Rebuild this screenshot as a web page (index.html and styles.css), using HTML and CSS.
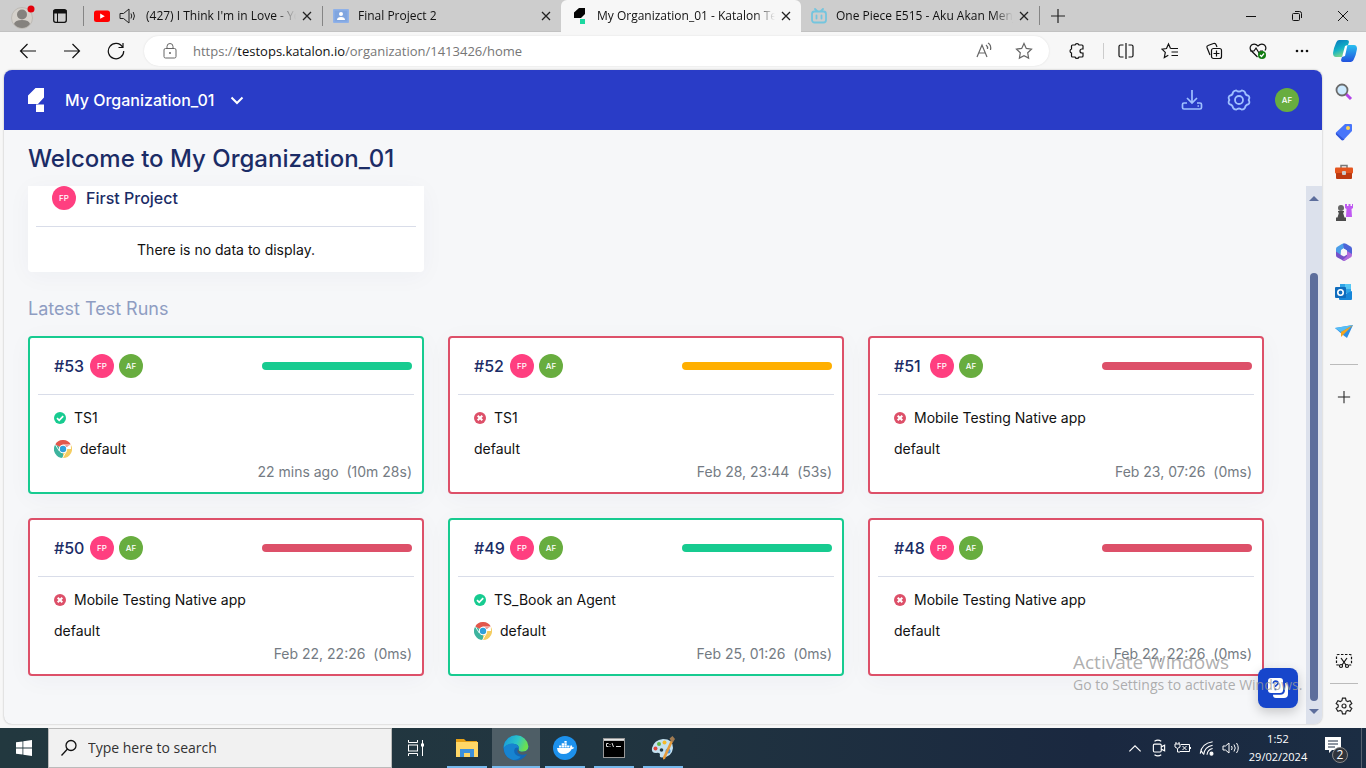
FILE: index.html
```html
<!DOCTYPE html>
<html lang="en">
<head>
<meta charset="utf-8">
<title>My Organization_01 - Katalon TestOps</title>
<link rel="stylesheet" href="styles.css">
</head>
<body>
<svg class="defs" aria-hidden="true">
  <symbol id="x" viewBox="0 0 16 16"><path d="M4 4l8 8M12 4l-8 8" fill="none" stroke="#222" stroke-width="1.3"/></symbol>
  <symbol id="plus" viewBox="0 0 16 16"><path d="M8 1v14M1 8h14" fill="none" stroke="#222" stroke-width="1.2"/></symbol>
  <symbol id="ok" viewBox="0 0 12 12"><circle cx="6" cy="6" r="6" fill="#17cb90"/><path d="M3 6.200l2.200 2.200L9.200 4.200" fill="none" stroke="#fff" stroke-width="1.700"/></symbol>
  <symbol id="bad" viewBox="0 0 12 12"><circle cx="6" cy="6" r="6" fill="#dd5069"/><path d="M3.700 3.700l4.600 4.600M8.300 3.700L3.700 8.300" fill="none" stroke="#fff" stroke-width="2"/></symbol>
  <symbol id="chrome" viewBox="0 0 18 18">
    <path d="M9 9L1.200 4.500A9 9 0 0 1 16.800 4.500z" fill="#e2574c"/><path d="M9 9L1.200 4.500A9 9 0 0 0 9 18z" fill="#3db39e"/><path d="M9 9h8L16.800 4.500A9 9 0 0 1 9 18z" fill="#f4cd61"/>
    <path d="M8.500 5H17M5.300 11L1.300 4.500M12.500 11L8.500 18" stroke="#fff" stroke-width=".9"/><circle cx="9" cy="9" r="4.200" fill="#fff"/><circle cx="9" cy="9" r="3.200" fill="#2fa0da"/></symbol>
</svg>

<header class="tabstrip">
  <button class="profile" aria-label="Profile"><svg width="24" height="24" viewBox="0 0 24 24"><circle cx="11" cy="13" r="10.500" fill="#d5d1cb" stroke="#bdbab5"/><circle cx="11" cy="9.500" r="5" fill="#85827e"/><path d="M3 19q1-4 8-4t8 4q-3 4-8 4t-8-4z" fill="#85827e"/><circle cx="20" cy="4" r="3.500" fill="#e3000b"/></svg></button>
  <button class="workspace" aria-label="Workspaces"><svg width="16" height="16" viewBox="0 0 16 16"><rect x="1.700" y="1.700" width="12.600" height="12.600" rx="2" fill="none" stroke="#111" stroke-width="1.300"/><path d="M1.500 2h13v3.500h-13z" fill="#111"/><path d="M5.500 4v10" stroke="#111"/></svg></button>
  <div class="tab divided">
    <svg width="16" height="16" viewBox="0 0 16 16"><rect y="2.500" width="16" height="11.500" rx="2.500" fill="#f00"/><path d="M6.200 5.500v5.300L10.800 8.200z" fill="#fff"/></svg>
    <svg width="18" height="18" viewBox="0 0 18 18" fill="none" stroke="#222"><path d="M1 6.500h3.500L10 2v14l-5.500-4.500H1zM12 6.500q1.500 2.500 0 5M14.200 5q2.500 4 0 8"/></svg>
    <a href="#" class="tab-name">(427) I Think I'm in Love - YouTube</a>
    <button aria-label="Close tab"><svg width="16" height="16"><use href="#x"/></svg></button>
  </div>
  <div class="tab divided">
    <svg width="16" height="16" viewBox="0 0 16 16"><rect y="1" width="16" height="14" rx="1" fill="#8fb1e8"/><rect x="1.500" y="2.500" width="13" height="11" fill="#80a5df"/><circle cx="8" cy="6" r="2" fill="#fff"/><path d="M4 12q0-3 4-3t4 3z" fill="#fff"/></svg>
    <a href="#" class="tab-name">Final Project 2</a>
    <button aria-label="Close tab"><svg width="16" height="16"><use href="#x"/></svg></button>
  </div>
  <div class="tab active">
    <svg width="16" height="16" viewBox="0 0 16 16"><path d="M7 0h6v6l-4 4H2V4.500z" fill="#050505"/><path d="M8 11h5v5H8z" fill="#1bd8a0"/></svg>
    <a href="#" class="tab-name">My Organization_01 - Katalon TestOps</a>
    <button aria-label="Close tab"><svg width="16" height="16"><use href="#x"/></svg></button>
  </div>
  <div class="tab last">
    <svg width="16" height="16" viewBox="0 0 16 16" fill="none" stroke="#74c5de" stroke-width="1.800" stroke-linecap="round"><rect x="1" y="3.500" width="14" height="11" rx="2.500"/><path d="M4 1l2 2M12 1l-2 2M5.500 7.500v3M10.500 7.500v3"/></svg>
    <a href="#" class="tab-name">One Piece E515 - Aku Akan Menjadi</a>
    <button aria-label="Close tab"><svg width="16" height="16"><use href="#x"/></svg></button>
  </div>
  <button class="new-tab" aria-label="New tab"><svg width="16" height="16"><use href="#plus"/></svg></button>
  <div class="window-buttons">
    <button aria-label="Minimize"><svg width="12" height="12"><path d="M1 6.500h10" stroke="#111"/></svg></button>
    <button aria-label="Restore"><svg width="12" height="12" fill="none" stroke="#111"><rect x="1.500" y="3.500" width="7" height="7" rx="1"/><path d="M4 1.500h4.500q2 0 2 2V8"/></svg></button>
    <button aria-label="Close"><svg width="12" height="12"><path d="M1 1l10 10M11 1L1 11" stroke="#111"/></svg></button>
  </div>
</header>

<nav class="toolbar">
  <button aria-label="Back"><svg width="18" height="18" viewBox="0 0 18 18"><path d="M17 9H1.500M8.500 2l-7 7 7 7"/></svg></button>
  <button aria-label="Forward"><svg width="18" height="18" viewBox="0 0 18 18"><path d="M1 9h15.500M9.500 2l7 7-7 7"/></svg></button>
  <button aria-label="Refresh"><svg width="18" height="18" viewBox="0 0 18 18"><path d="M15.500 5A7.700 7.700 0 1 0 16.700 9M16 1v4.500h-4.500"/></svg></button>
  <div class="address">
    <svg width="14" height="16" viewBox="0 0 14 16" fill="none" stroke="#666"><rect x="1" y="5.500" width="12" height="9.500" rx="1.500"/><path d="M4 5.500V3.500a3 3 0 0 1 6 0v2"/><circle cx="7" cy="10" r=".6" fill="#666"/></svg>
    <a href="#" class="url">https://<b>testops.katalon.io</b>/organization/1413426/home</a>
    <button aria-label="Read aloud"><svg width="18" height="18" viewBox="0 0 18 18" class="muted"><path d="M2 15L7 3l5 12M3.800 11h6.400M11 3q2 1.500 1.500 4M13 1q3.500 2 2.500 7"/></svg></button>
    <button aria-label="Favorite"><svg width="18" height="18" viewBox="0 0 18 18" class="muted"><path d="M9 1.500l2.300 4.900 5.200.7-3.800 3.700.9 5.300L9 13.600l-4.600 2.500.9-5.300L1.500 7.100l5.200-.7z"/></svg></button>
  </div>
  <button class="ext" aria-label="Extensions"><svg width="18" height="18" viewBox="0 0 18 18"><path d="M4.500 3H7a2.100 2.100 0 0 1 4 0h3q1 0 1 1v3h-1a2 2 0 0 0 0 4h1v3q0 1-1 1h-3a2.100 2.100 0 0 1-4 0H4.500q-1 0-1-1v-3a2.100 2.100 0 0 1 0-4V4q0-1 1-1z"/></svg></button>
  <button aria-label="Split screen"><svg width="18" height="18" viewBox="0 0 18 18"><path d="M6.500 3h-3Q2 3 2 4.500v9Q2 15 3.500 15h3M11.500 3h3Q16 3 16 4.500v9q0 1.500-1.500 1.500h-3M9 1v16"/></svg></button>
  <button aria-label="Favorites"><svg width="18" height="18" viewBox="0 0 18 18"><path d="M9.500 6.500L7.500 2l-2 4.500-4.500.7 3.300 3.200-1 5.100 4-2.200M9.500 6.500H17M10.500 10H17M10.500 13.500H17"/></svg></button>
  <button aria-label="Collections"><svg width="18" height="18" viewBox="0 0 18 18"><rect x="6.500" y="6.500" width="10" height="10" rx="2"/><path d="M11.500 8.500v6M8.500 11.500h6M5 13L2 5.500Q1.500 4 3 3.500L8.500 1.500Q10.500 1 11 2.500L12 5"/></svg></button>
  <button aria-label="Browser essentials"><svg width="18" height="18" viewBox="0 0 18 18"><path d="M8.500 15L2 8.500Q0 5.500 2.500 3 6 1 9 4q3-3 6.500-1Q18 5.500 16 8.500M1 9h4l2-3 3 5 1.500-2H14"/><circle cx="13" cy="13" r="4" fill="#107c10" stroke="none"/><path d="M11 13l1.500 1.500L15 11.500" stroke="#fff"/></svg></button>
  <button aria-label="More"><svg width="18" height="18" viewBox="0 0 18 18"><g fill="#111" stroke="none"><circle cx="4" cy="9" r="1.300"/><circle cx="9" cy="9" r="1.300"/><circle cx="14" cy="9" r="1.300"/></g></svg></button>
  <button aria-label="Copilot" class="copilot"><svg width="24" height="24" viewBox="0 0 24 24"><defs><linearGradient id="ca" x2=".4" y2="1"><stop stop-color="#0874bd"/><stop offset=".6" stop-color="#12b2c6"/><stop offset="1" stop-color="#80d68a"/></linearGradient><linearGradient id="cb" x2="0" y2="1"><stop stop-color="#29c0f0"/><stop offset="1" stop-color="#2252de"/></linearGradient></defs><path d="M6 1h8q2 0 2 2L12 15q-1 3-4 3H3q-3 0-3-4Q1 8 3 4 4 1 6 1z" fill="url(#ca)" stroke="none"/><path d="M18 6h3q3 0 3 4-1 6-3 10-1 3-3 3h-8q-2 0-2-2L12 9q1-3 4-3z" fill="url(#cb)" stroke="none"/><path d="M12 7l2.500-1L12 17l-3 1z" fill="#fff" stroke="none"/></svg></button>
</nav>

<div class="middle">
  <div class="app">
    <header class="app-bar">
      <svg width="16" height="24" viewBox="0 0 16 24"><path d="M7.500 0H16v9.500L10 16H0V7.500zM8 16.500h8V24H8z" fill="#fff"/></svg>
      <button class="org">My Organization_01<svg width="14" height="9" viewBox="0 0 14 9"><path d="M1.500 1.500L7 7l5.500-5.500" fill="none" stroke="#fff" stroke-width="2"/></svg></button>
      <div class="app-actions">
        <button aria-label="Download"><svg width="22" height="22" viewBox="0 0 22 22" fill="none" stroke="#9fc0ff" stroke-width="1.700"><path d="M11 1v13M6 9l5 5 5-5M6 14H3q-1.500 0-1.500 1.500v3Q1.500 20 3 20h16q1.500 0 1.500-1.500v-3Q20.500 14 19 14h-3"/><path d="M16.500 17h1.500"/></svg></button>
        <button aria-label="Settings"><svg width="24" height="24" viewBox="0 0 24 24" fill="none" stroke="#9fc0ff" stroke-width="1.800" stroke-linejoin="round"><circle cx="12" cy="12" r="4"/><path d="M9.200 2.300Q12 4.800 14.800 2.300q2.200.2 3.200 2 .3 3 3.700 3.600 1.400 2-.1 4.100 1.500 2.100.1 4.100-3.400.6-3.700 3.600-1 1.800-3.200 2-2.800-2.500-5.600 0-2.200-.2-3.200-2-.3-3-3.700-3.600-1.400-2 .1-4.100-1.500-2.100-.1-4.100 3.400-.6 3.700-3.600 1-1.800 3.200-2z"/></svg></button>
        <button class="avatar af" aria-label="Account AF">AF</button>
      </div>
    </header>
    <h1>Welcome to My Organization_01</h1>
    <div class="scroller">
      <main>
        <section class="project"><h3><span class="avatar fp">FP</span>First Project</h3><p>There is no data to display.</p></section>
        <h2>Latest Test Runs</h2>
        <div class="runs">
          <article class="run pass"><header><a href="#">#53</a><span class="avatar fp">FP</span><span class="avatar af">AF</span><i class="bar green"></i></header><div class="body"><p><svg width="12" height="12"><use href="#ok"/></svg>TS1</p><p><svg width="18" height="18"><use href="#chrome"/></svg>default</p><time>22 mins ago&nbsp; (10m 28s)</time></div></article>
          <article class="run"><header><a href="#">#52</a><span class="avatar fp">FP</span><span class="avatar af">AF</span><i class="bar amber"></i></header><div class="body"><p><svg width="12" height="12"><use href="#bad"/></svg>TS1</p><p>default</p><time>Feb 28, 23:44&nbsp; (53s)</time></div></article>
          <article class="run"><header><a href="#">#51</a><span class="avatar fp">FP</span><span class="avatar af">AF</span><i class="bar"></i></header><div class="body"><p><svg width="12" height="12"><use href="#bad"/></svg>Mobile Testing Native app</p><p>default</p><time>Feb 23, 07:26&nbsp; (0ms)</time></div></article>
          <article class="run"><header><a href="#">#50</a><span class="avatar fp">FP</span><span class="avatar af">AF</span><i class="bar"></i></header><div class="body"><p><svg width="12" height="12"><use href="#bad"/></svg>Mobile Testing Native app</p><p>default</p><time>Feb 22, 22:26&nbsp; (0ms)</time></div></article>
          <article class="run pass"><header><a href="#">#49</a><span class="avatar fp">FP</span><span class="avatar af">AF</span><i class="bar green"></i></header><div class="body"><p><svg width="12" height="12"><use href="#ok"/></svg>TS_Book an Agent</p><p><svg width="18" height="18"><use href="#chrome"/></svg>default</p><time>Feb 25, 01:26&nbsp; (0ms)</time></div></article>
          <article class="run"><header><a href="#">#48</a><span class="avatar fp">FP</span><span class="avatar af">AF</span><i class="bar"></i></header><div class="body"><p><svg width="12" height="12"><use href="#bad"/></svg>Mobile Testing Native app</p><p>default</p><time>Feb 22, 22:26&nbsp; (0ms)</time></div></article>
        </div>
      </main>
      <div class="scrollbar"><i class="arrow up"></i><i class="thumb"></i><i class="arrow down"></i></div>
    </div>
    <button class="help" aria-label="Help"><svg width="20" height="20" viewBox="0 0 20 20"><path d="M3 0h9q3 0 3 3v9q0 3-3 3H3q-3 0-3-3V3q0-3 3-3z" fill="#fff"/><path d="M5.300 5.500q0-2.300 2.300-2.300t2.300 2q0 1.300-1.300 1.900T7.500 9M7.500 10.500v1.700" fill="none" stroke="#1746cb" stroke-width="1.700"/><path d="M17 5q3 0 3 3v8q0 4-4 4H8q-3 0-3-3.300h7q5 0 5-5z" fill="#fff"/></svg></button>
    <div class="watermark"><strong>Activate Windows</strong><span>Go to Settings to activate Windows.</span></div>
  </div>

  <aside class="sidebar">
    <button aria-label="Search"><svg width="18" height="18" viewBox="0 0 18 18"><path d="M11 11l5 5" stroke="#b344e8" stroke-width="3"/><circle cx="7" cy="7" r="5.500" fill="#cdeaff" stroke="#6b6b6b" stroke-width="1.800"/></svg></button>
    <button aria-label="Shopping"><svg width="18" height="18" viewBox="0 0 18 18"><path d="M10 1h6q1 0 1 1v6l-8.500 9q-1 .5-2 0L1 11.500q-.5-1.500 0-2z" fill="#4875fa"/><path d="M1 9.500l8.500 7.300-1 .2q-1 .5-2 0L1 11.500z" fill="#3257d8"/><circle cx="13" cy="5" r="2" fill="#ffd34d"/></svg></button>
    <button aria-label="Tools"><svg width="18" height="18" viewBox="0 0 18 18"><path d="M6 5V2.500h6V5" fill="none" stroke="#777" stroke-width="1.500"/><rect y="4.500" width="18" height="6" rx="1" fill="#e4551e"/><path d="M1 10h16v5q0 1-1 1H2q-1 0-1-1z" fill="#bd3a10"/><rect x="7" y="8" width="4" height="4" rx="1" fill="#ccc"/></svg></button>
    <button aria-label="Games"><svg width="18" height="18" viewBox="0 0 18 18"><path d="M10 1h2v2h1.500V1h2v2H17V1h1v4l-1.500 1 .5 8h-6l.5-8L10 5z" fill="#c05af2"/><circle cx="6" cy="5" r="3" fill="#666"/><path d="M3 8h6v1.500H8l1.500 5H11V18H1v-3.500h1.500l1.500-5H3z" fill="#4c4c4c"/></svg></button>
    <button aria-label="Microsoft 365"><svg width="18" height="18" viewBox="0 0 18 18"><path d="M6 1.500q3-2 5.500 0L9 5 6 7l-.5 6L2 12q-1-.5-1-2V6q0-1.500 1-2z" fill="#4b9ee8"/><path d="M1 8.500l5 3.500 3 1.500L13 11l1 4-3.500 2.300q-1.500 1-3 0L2 14.200q-1-.7-1-2z" fill="#7650c8"/><path d="M12 6l5 2v4q0 1.500-1 2.200l-5.500 3.100q-1.500 1-3 0L12 13z" fill="#b06bdc"/><path d="M8 .8q1.500-.8 3 0L16 3.800q1 .7 1 2.200v5l-5-3-3-2.500z" fill="#4c64d7"/><path d="M9 5.800l3 1.600v3.400l-3 1.700-3-1.700V7.400z" fill="#f7f7f7"/></svg></button>
    <button aria-label="Outlook"><svg width="18" height="18" viewBox="0 0 18 18"><path d="M5 1h10q1 0 1 1v8H5z" fill="#2fa4e7"/><path d="M10 1h6v5h-6z" fill="#56c8f5"/><path d="M4 8l6 3 7-3v8q0 1-1 1H5q-1 0-1-1z" fill="#1686d9"/><rect y="4" width="11" height="11" rx="1" fill="#0f6cbd"/><circle cx="5.500" cy="9.500" r="2.700" fill="none" stroke="#fff" stroke-width="1.600"/></svg></button>
    <button aria-label="Drop"><svg width="18" height="18" viewBox="0 0 18 18"><path d="M0 5l18-3-6 13-4-3z" fill="#2b8fe8"/><path d="M0 5l18-3L6 9z" fill="#56bdf5"/><path d="M18 2L6 9v5l3-3z" fill="#f3a51f"/></svg></button>
    <hr>
    <button class="add" aria-label="Customize"><svg width="14" height="14"><use href="#plus"/></svg></button>
    <button class="shot" aria-label="Screenshot"><svg width="18" height="18" viewBox="0 0 18 18" fill="none" stroke="#111" stroke-width="1.200"><path d="M4 13H2.500Q1.500 13 1.500 12V4q0-1.500 1.500-1.500h12q1.500 0 1.500 1.500v8q0 1-1 1H14" stroke-dasharray="2.500 1.500"/><path d="M6 6l5 7M12 6l-5 7"/><circle cx="6" cy="14" r="1.500"/><circle cx="12" cy="14" r="1.500"/></svg></button>
    <hr>
    <button class="gear" aria-label="Settings"><svg width="18" height="18" viewBox="0 0 18 18" fill="none" stroke="#222" stroke-width="1.200"><circle cx="9" cy="9" r="2"/><path d="M7.500 1.200h3l.6 2.500 1.500.9 2.500-.8 1.700 2.700-2 1.600v1.800l2 1.600-1.700 2.700-2.500-.8-1.500.9-.6 2.500h-3l-.6-2.500-1.500-.9-2.500.8-1.700-2.700 2-1.600V8.100l-2-1.600 1.700-2.700 2.500.8 1.500-.9z"/></svg></button>
  </aside>
</div>

<footer class="taskbar">
  <button class="start" aria-label="Start"><svg width="16" height="16" viewBox="0 0 16 16"><path d="M0 2.300L6.500 1.400v6.100H0zM7.300 1.300L16 0v7.500H7.300zM0 8.400h6.500v6.200L0 13.700zM7.300 8.400H16V16l-8.700-1.300z" fill="#fff"/></svg></button>
  <label class="search"><svg width="18" height="18" viewBox="0 0 18 18" fill="none" stroke="#111" stroke-width="1.300"><circle cx="11" cy="6.500" r="5"/><path d="M7.500 10L1.500 16.500"/></svg><input type="text" placeholder="Type here to search" aria-label="Search"></label>
  <button class="view" aria-label="Task view"><svg width="18" height="16" viewBox="0 0 18 16" fill="none" stroke="#fff"><path d="M1.500 0v2.500h9V0M1.500 16v-2.500h9V16M15.500 0v16"/><rect x="1.500" y="5" width="9" height="6"/><path d="M14 3.500h3v3h-3z" fill="#fff" stroke="none"/></svg></button>
  <button class="task" aria-label="File Explorer"><svg width="24" height="24" viewBox="0 0 24 24"><path d="M1 3h8l2 2h11v16H1z" fill="#e6a117"/><path d="M1 6h22v15H1z" fill="#ffd767"/><path d="M5 21v-8h14v8h-4v-4H9v4z" fill="#3d91dc"/></svg></button>
  <button class="task current" aria-label="Edge"><svg width="26" height="26" viewBox="0 0 24 24"><defs><linearGradient id="ea" x2="1" y2=".3"><stop stop-color="#1795dc"/><stop offset=".6" stop-color="#2cc5c8"/><stop offset="1" stop-color="#6be050"/></linearGradient></defs><circle cx="12" cy="12" r="11.500" fill="#1267b5"/><path d="M.7 10A11.500 11.500 0 0 1 23.500 10.500Q23 16 16.500 15.500 14 15 14.500 13 15.500 8.500 9.500 8 4 8 .7 12z" fill="url(#ea)"/><path d="M.6 11.500Q4 7.500 9.500 8q4.500.5 5 4-3.500-1.500-4.200 2-.3 5 6.200 6-3 3-7 3Q.8 21 .6 11.500z" fill="#1784d0"/><path d="M14.500 13q-.5 2 2 2.500 5 .5 7-3l1 5.500-2.500-.5q-4.500 1.500-7.500-.5-2.500-2 0-4z" fill="#4e5e66"/></svg></button>
  <button class="task" aria-label="Docker"><svg width="24" height="24" viewBox="0 0 24 24"><circle cx="12" cy="12" r="12" fill="#1d91ec"/><path d="M4 12h13q0-2 1-3 1.500 1 1.300 2.300l2 .2q-.8 1.500-2.800 1.700Q16.500 18 10.500 18 4.500 18 4 12zM6 9.500h2.300v2H6zM8.700 9.500H11v2H8.700zM11.400 9.500h2.300v2h-2.300zM14.100 9.500h2.300v2h-2.300zM8.700 7.200H11v2H8.700zM11.400 7.200h2.300v2h-2.300zM11.400 5h2.300v1.800h-2.300z" fill="#fff"/></svg></button>
  <button class="task" aria-label="Command Prompt"><svg width="22" height="20" viewBox="0 0 22 20"><rect width="22" height="20" fill="#999"/><rect x="1" y="3" width="20" height="16" fill="#000"/><path d="M1 1h20v1.500H1z" fill="#e6e6e6"/><path d="M5.500 5.500H3.500v3h2M7 6v.8M7 8v.8M9 5l1.500 4M13 8.500h5" fill="none" stroke="#ddd"/></svg></button>
  <button class="task" aria-label="Paint"><svg width="24" height="24" viewBox="0 0 24 24"><path d="M12 3Q22 3 22 12 21 21 11 21.500 8 21.500 9 18.500 9 16 5 17 0 17 1 12 3 4 12 3z" fill="#c4e1f0"/><circle cx="4.500" cy="12.500" r="2" fill="#e1483c"/><circle cx="8" cy="8" r="2" fill="#61b848"/><circle cx="13.500" cy="6.500" r="2" fill="#f5ba28"/><circle cx="10.500" cy="14" r="1.800" fill="#243842"/><circle cx="17" cy="15" r="2.500" fill="#4a94dd"/><path d="M20 4l2 1.500L14 23l-2 .5V21z" fill="#e69b3b"/><path d="M18.500 2.500L21.500 0l2.500 3-2.500 4z" fill="#a07b52"/></svg></button>
  <div class="tray">
    <button aria-label="Hidden icons"><svg width="16" height="18" viewBox="0 0 14 16"><path d="M2 11l5-5 5 5"/></svg></button>
    <button aria-label="Meet Now"><svg width="16" height="18" viewBox="0 0 14 16"><rect x="2" y="4.500" width="7" height="7" rx="1"/><path d="M9 7l3-1.500v5L9 9M3 2q3-2 6 0M3 14q3 2 6 0"/></svg></button>
    <button aria-label="Battery"><svg width="18" height="16" viewBox="0 0 18 16"><path d="M1 4h5v3q-2.500 3-5 0zM2 2v2M5 2v2M3.500 9v3H6M7 4.500h8.500v7H6M16.500 7v2M8.500 6l4 4M12.500 6l-4 4"/></svg></button>
    <button aria-label="Network"><svg width="16" height="18" viewBox="0 0 14 16"><path d="M1 13Q2 4 12 2.500M4 14Q4.500 7 12 5.500M7 14q.5-4.500 5-5.500M1.500 10l2 3"/><circle cx="11" cy="13" r="1.300" fill="#fff"/></svg></button>
    <button aria-label="Volume"><svg width="18" height="16" viewBox="0 0 18 16"><path d="M1 6h2.500L7 3v10l-3.500-3H1zM9.500 6q1.300 2 0 4M12 4.500q2.500 3.500 0 7M14.500 3q3.500 5 0 10"/></svg></button>
    <div class="clock"><span>1:52</span><span>29/02/2024</span></div>
    <button class="notify" aria-label="2 notifications"><svg width="26" height="26" viewBox="0 0 26 26"><path d="M1 2h16v13H8l-3 3v-3H1z" fill="#fff" stroke="none"/><path d="M4 6h10M4 9h10M4 12h7" stroke="#1c2b40"/></svg><span class="count">2</span></button>
  </div>
</footer>
</body>
</html>
```
FILE: styles.css
```css
* { box-sizing: border-box; }
body { margin: 0; height: 100vh; display: flex; flex-direction: column; overflow: hidden; background: #f7f7f7; color: #111; font: 12px/16px "Open Sans", "Noto Sans", sans-serif; }
button { border: 0; padding: 0; background: none; color: inherit; font: inherit; display: flex; align-items: center; justify-content: center; flex: none; }
a { color: inherit; text-decoration: none; }
svg { flex: none; display: block; }
h1, h2, h3, p { margin: 0; font-weight: 400; }
.defs { position: absolute; width: 0; height: 0; }

.tabstrip { display: flex; height: 32px; flex: none; background: #cdcdcd; border-bottom: 1px solid #c2c2c2; }
.profile { width: 46px; padding-top: 2px; }
.workspace { width: 37px; padding-right: 9px; }
.tab { display: flex; align-items: center; gap: 9px; flex: 0 1 239px; min-width: 0; padding: 0 7px 0 10px; border-left: 1px solid transparent; }
.tab.divided { border-image: linear-gradient(#0000 6px, #858585 6px, #858585 26px, #0000 26px) 0 0 0 1; }
.tab.active { flex-basis: 240px; height: 32px; background: #f7f7f7; border-radius: 6px 6px 0 0; }
.tab.last { flex-basis: 238px; padding-left: 9px; }
.tab-name { flex: 1; min-width: 0; overflow: hidden; white-space: nowrap; -webkit-mask-image: linear-gradient(to left, transparent, #000 20px); mask-image: linear-gradient(to left, transparent, #000 20px); }
.tab button { margin-left: -6px; }
.new-tab { width: 36px; border-left: 1px solid #858585; margin: 6px 0; }
.window-buttons { display: flex; margin-left: auto; }
.window-buttons button { width: 46px; }

.toolbar { display: flex; align-items: center; height: 38px; flex: none; padding-left: 6px; }
.toolbar > button { width: 44px; height: 30px; }
.toolbar button svg { fill: none; stroke: #111; stroke-width: 1.2; }
.toolbar button .muted { stroke: #666; }
.address { flex: 1; height: 30px; display: flex; align-items: center; margin-left: 6px; padding: 0 5px 0 19px; background: #fff; border-radius: 15px; box-shadow: 0 0 2px #ddd; }
.address button { width: 40px; }
.url { flex: 1; margin-left: 16px; color: #767676; font-size: 13px; line-height: 20px; }
.url b { color: #111; font-weight: 400; }
.toolbar > .ext { width: 55px; position: relative; }
.ext::after { content: ""; position: absolute; right: 0; top: 7px; height: 16px; border-left: 1px solid #ccc; }
.toolbar > .copilot { width: 42px; }

.middle { flex: 1; min-height: 0; display: flex; }
.app { position: relative; flex: 1; min-width: 0; display: flex; flex-direction: column; margin: 0 0 4px 4px; border-radius: 8px; overflow: hidden; background: #f6f7f9; box-shadow: 0 0 2px #aaa; color: #111; font-family: Inter, sans-serif; }
.app-bar { display: flex; align-items: center; height: 60px; flex: none; padding: 0 23px 0 24px; background: #293cc7; color: #fff; }
.org { gap: 16px; margin-left: 21px; font-size: 16px; font-weight: 500; line-height: 20px; }
.app-actions { display: flex; align-items: center; gap: 24px; margin-left: auto; }
h1 { flex: none; padding: 13px 24px 11px; color: #1b2c66; font-size: 24px; font-weight: 500; line-height: 32px; }
.avatar { width: 24px; height: 24px; flex: none; display: inline-flex; align-items: center; justify-content: center; border-radius: 50%; color: #fff; font-size: 8px; font-weight: 500; line-height: 12px; }
.af { background: #68ad3f; }
.fp { background: #ff3f80; }
.scroller { flex: 1; min-height: 0; display: flex; }
main { flex: 1; min-width: 0; padding: 0 42px 0 24px; }
.project { width: calc((100% - 48px) / 3); height: 86px; padding: 0 8px; background: #fff; border-radius: 0 0 4px 4px; box-shadow: 0 4px 24px #1b2c660a; text-align: center; font-size: 14px; }
.project h3 { display: flex; align-items: center; gap: 10px; height: 41px; padding: 0 16px 16px; border-bottom: 1px solid #d9dde9; color: #1b2c66; font-size: 16px; font-weight: 500; line-height: 24px; }
.project p { padding-top: 13px; line-height: 20px; }
h2 { padding: 25px 0 15px; color: #8f9dc2; font-size: 18px; line-height: 24px; }
.runs { display: grid; grid-template-columns: repeat(3, 1fr); gap: 24px; }
.run { padding: 0 8px; height: 158px; border: 2px solid #dd5069; border-radius: 4px; background: #fff; box-shadow: 0 4px 24px #1b2c660a; font-size: 14px; line-height: 20px; }
.run.pass { border-color: #17cb90; }
.run header { display: flex; align-items: center; gap: 5px; height: 57px; padding: 0 2px 0 16px; border-bottom: 1px solid #d9dde9; color: #1b2c66; font-size: 16px; font-weight: 500; }
.run header a { min-width: 31px; }
.bar { width: 150px; height: 8px; margin-left: auto; border-radius: 4px; background: #dd5069; }
.bar.green { background: #17cb90; }
.bar.amber { background: #ffaf00; }
.body { display: flex; flex-direction: column; gap: 11px; padding: 13px 2px 0 16px; }
.body p { display: flex; align-items: center; gap: 8px; }
.body time { align-self: flex-end; margin-top: -8px; color: #747b83; }
.scrollbar { width: 16px; display: flex; flex-direction: column; align-items: center; padding: 10px 0; background: #dce1ec; }
.arrow { border: 5px solid transparent; height: 0; }
.up { border-top: 0; border-bottom-color: #5d6e9c; }
.down { border-bottom: 0; border-top-color: #5d6e9c; }
.thumb { width: 8px; flex: 1; margin: 72px 0 8px; border-radius: 4px; background: #5d6e9c; }
.help { position: absolute; right: 24px; bottom: 16px; width: 40px; height: 40px; border-radius: 8px; background: #1746cb; box-shadow: 0 4px 12px #0003; }
.watermark { position: absolute; right: 12px; bottom: 29px; display: flex; flex-direction: column; width: 237px; white-space: nowrap; color: #9a9a9acc; font: 14px/20px "Open Sans", sans-serif; pointer-events: none; }
.watermark strong { font-size: 19px; font-weight: 400; line-height: 25px; }

.sidebar { width: 44px; flex: none; display: flex; flex-direction: column; align-items: center; padding: 2px 0; }
.sidebar button { width: 40px; height: 40px; }
.sidebar hr { width: 28px; margin: 12px 0; border: 0; border-top: 1px solid #bbb; flex: none; }
.sidebar .shot { margin-top: auto; }
.sidebar .shot + hr { margin: 2px 0; }

.taskbar { display: flex; height: 40px; flex: none; background: linear-gradient(90deg, #22383f, #213540 45%, #1a2840 80%, #1b2d43); color: #fff; }
.start, .view, .task { width: 48px; }
.search { width: 344px; display: flex; align-items: center; gap: 10px; padding: 0 11px; border: 1px solid #bbb; background: #f1f1f1; color: #333; }
.search input { flex: 1; min-width: 0; padding: 0; border: 0; outline: 0; background: none; color: #333; font: 14px/20px "Open Sans", sans-serif; }
.search input::placeholder { color: #333; opacity: 1; }
.view { margin-right: 3px; }
.task { margin-right: 1px; background: linear-gradient(#76b9ed, #76b9ed) bottom / 40px 2px no-repeat; }
.current { background: linear-gradient(#76b9ed, #76b9ed) bottom / 48px 2px no-repeat #4e5e66; }
.tray { display: flex; align-items: center; margin-left: auto; }
.tray > button { width: 24px; height: 40px; }
.tray svg { fill: none; stroke: #fff; }
.clock { width: 68px; display: flex; flex-direction: column; align-items: center; font-size: 11px; line-height: 18px; margin-left: 1px; }
.tray > .notify { position: relative; width: 50px; margin-right: 4px; border-right: 1px solid #56616f; }
.count { position: absolute; left: 20px; top: 19px; width: 16px; height: 16px; border: 1px solid #888; border-radius: 50%; background: #30343b; line-height: 14px; text-align: center; }
```
